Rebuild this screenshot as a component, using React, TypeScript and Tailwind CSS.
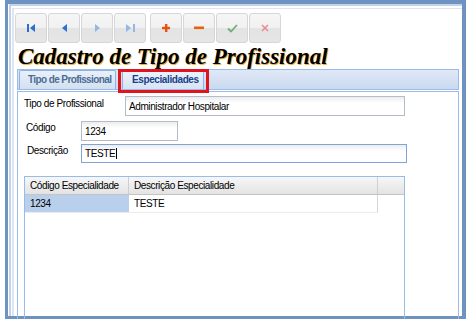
import React from "react";

const Btn = ({ children }: { children: React.ReactNode }) => (
  <div className="w-[32px] h-[30px] rounded-[3px] border border-[#d6d6d6] bg-[linear-gradient(#f6f6f6_0%,#f1f1f1_48%,#e3e3e3_52%,#e6e6e6_100%)] flex items-center justify-center">
    {children}
  </div>
);

export default function App() {
  const sans = "font-['Liberation_Sans',Arial,sans-serif]";
  return (
    <div className={`w-[472px] h-[319px] bg-white overflow-hidden ${sans}`}>
      <div className="ml-[5px] w-[461px] h-[319px] border-[#6f93c0] border-t-4 border-l-[3px] border-r-4 border-b-[3px] bg-white">
        <div className="h-full pl-px">
          <div className="h-full border-l-2 border-t-2 border-[#c3d2e8]">
            <div className="h-full pl-px pt-[2px]">
              <div className="h-full border-l-2 border-t border-[#dfe5ee] flex flex-col">
                {/* toolbar */}
                <div className="mt-[4px] ml-px flex gap-px">
                  <Btn>
                    <svg width="9" height="8" viewBox="0 0 9 8">
                      <rect x="0" y="0" width="2" height="8" fill="#2e6cd0" />
                      <polygon points="8,0 8,8 3,4" fill="#2e6cd0" />
                    </svg>
                  </Btn>
                  <Btn>
                    <svg width="7" height="8" viewBox="0 0 7 8">
                      <polygon points="6,0 6,8 1,4" fill="#2b6fd8" />
                    </svg>
                  </Btn>
                  <Btn>
                    <svg width="7" height="8" viewBox="0 0 7 8">
                      <polygon points="1,0 1,8 6,4" fill="#92b8e6" />
                    </svg>
                  </Btn>
                  <Btn>
                    <svg width="9" height="8" viewBox="0 0 9 8">
                      <polygon points="0,0 0,8 5,4" fill="#92b8e6" />
                      <rect x="7" y="0" width="2" height="8" fill="#92b8e6" />
                    </svg>
                  </Btn>
                  <div className="w-[2px]" />
                  <Btn>
                    <svg width="8" height="8" viewBox="0 0 8 8">
                      <rect x="3" y="0" width="2.4" height="8" fill="#e8520c" />
                      <rect x="0" y="2.8" width="8" height="2.4" fill="#e8520c" />
                    </svg>
                  </Btn>
                  <Btn>
                    <svg width="10" height="4" viewBox="0 0 10 4">
                      <rect x="0" y="0.5" width="10" height="2.6" fill="#e8600e" />
                    </svg>
                  </Btn>
                  <Btn>
                    <svg width="11" height="9" viewBox="0 0 11 9">
                      <polyline points="1,4.5 4,7.5 10,1" fill="none" stroke="#74aa7c" strokeWidth="1.8" />
                    </svg>
                  </Btn>
                  <Btn>
                    <svg width="8" height="8" viewBox="0 0 8 8">
                      <path d="M1,1 L7,7 M7,1 L1,7" stroke="#ea8a8a" strokeWidth="1.5" />
                    </svg>
                  </Btn>
                </div>
                {/* title */}
                <div className="mt-[2px] ml-[4px] h-[24px] leading-[24px] text-[23px] font-bold italic text-black font-['Liberation_Serif',serif] [text-shadow:1px_1px_0.5px_#f3b23a] whitespace-nowrap">
                  Cadastro de Tipo de Profissional
                </div>
                {/* tab panel */}
                <div className="ml-[3px] w-[442px] flex-1 flex flex-col relative">
                  <div className="h-[21px] border border-[#99bbe8] bg-[linear-gradient(#dfe8f6,#cbdaf0)] flex items-end pl-px gap-[6px]">
                    <div className="h-[19px] pl-[8px] border border-b-0 border-[#8db2e3] rounded-t-[2px] bg-[linear-gradient(#eaf0f9,#d3dff0)] text-[10px] tracking-[-0.6px] font-bold text-[#4a6d95] leading-[18px] w-[97px] whitespace-nowrap overflow-hidden">
                      Tipo de Profissional
                    </div>
                    <div className="h-[19px] pl-[9px] border border-b-0 border-[#8db2e3] rounded-t-[2px] bg-[linear-gradient(#eef3fa,#d8e3f3)] text-[10px] tracking-[-0.4px] font-bold text-[#15428b] leading-[18px] w-[82px] whitespace-nowrap overflow-hidden">
                      Especialidades
                    </div>
                  </div>
                  <div className="absolute left-[101px] top-0 w-[91px] h-[24px] border-[3px] border-[#e0141e]" />
                  <div className="mt-px flex-1 border-l border-r border-t border-[#99bbe8] pl-[6px] pt-[4px] text-[10px] tracking-[-0.4px] text-black">
                    <div className="flex items-start h-[20px]">
                      <div className="w-[101px] pt-[2px] leading-[12px] whitespace-nowrap">Tipo de Profissional</div>
                      <div className="w-[280px] h-[20px] border border-[#b4bccb] bg-[linear-gradient(#ececec,#ffffff_6px)] pl-[3px] leading-[19px] text-[10px]">
                        Administrador Hospitalar
                      </div>
                    </div>
                    <div className="flex items-start h-[20px] mt-[5px]">
                      <div className="w-[57px] pl-[2px] pt-[1px] leading-[12px]">Código</div>
                      <div className="w-[97px] h-[20px] border border-[#b4bccb] bg-[linear-gradient(#ececec,#ffffff_6px)] pl-[3px] leading-[19px]">
                        1234
                      </div>
                    </div>
                    <div className="flex items-start h-[19px] mt-[3px]">
                      <div className="w-[57px] pl-[3px] pt-[1px] leading-[12px]">Descrição</div>
                      <div className="w-[326px] h-[19px] border border-[#7fa5d6] bg-[linear-gradient(#ececec,#ffffff_6px)] pl-[3px] leading-[18px] flex items-center">
                        TESTE<span className="inline-block w-px h-[11px] bg-black ml-px" />
                      </div>
                    </div>
                    {/* grid */}
                    <div className="mt-[13px] w-[381px] h-[200px] border border-[#99bbe8]">
                      <div className="h-[18px] flex border-b border-[#c4c4c4] bg-[linear-gradient(#f7f7f7,#e3e3e3)] leading-[17px]">
                        <div className="w-[104px] border-r border-[#cfcfcf] pl-[5px] whitespace-nowrap">Código Especialidade</div>
                        <div className="w-[249px] border-r border-[#cfcfcf] pl-[5px] whitespace-nowrap">Descrição Especialidade</div>
                        <div className="flex-1" />
                      </div>
                      <div className="flex h-[18px] leading-[17px] w-[353px] border-b border-[#ececec]">
                        <div className="w-[104px] bg-[#b9d0ed] pl-[5px]">1234</div>
                        <div className="w-[249px] border-r border-[#d6d6d6] pl-[5px]">TESTE</div>
                      </div>
                    </div>
                  </div>
                </div>
              </div>
            </div>
          </div>
        </div>
      </div>
    </div>
  );
}
